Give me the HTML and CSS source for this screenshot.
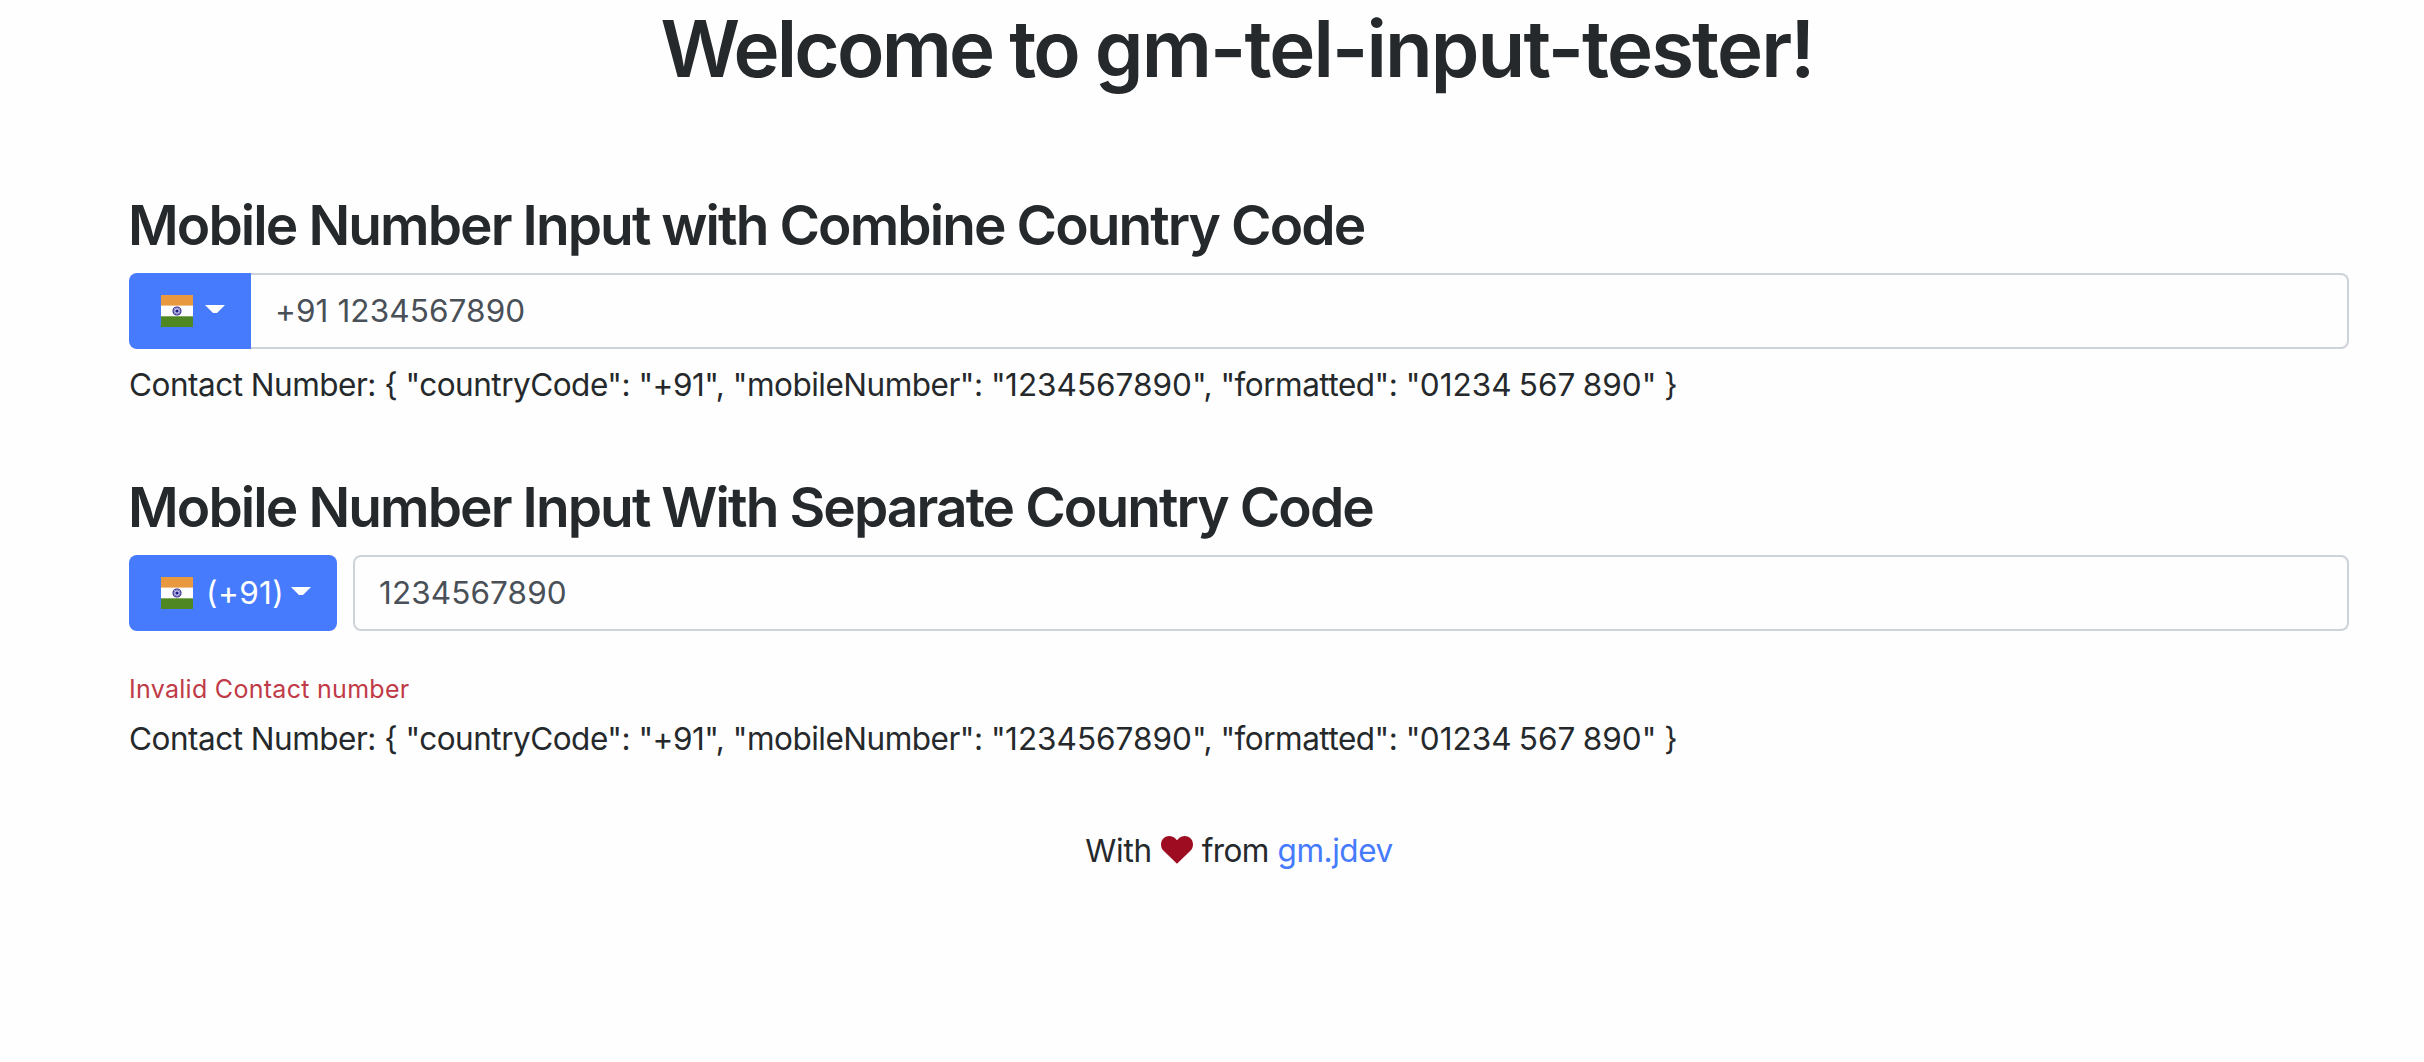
FILE: index.html
```html
<!DOCTYPE html>
<html lang="en">
<head>
<meta charset="utf-8">
<title>gm-tel-input-tester</title>
<link rel="stylesheet" href="styles.css">
</head>
<body>
<svg class="defs" width="0" height="0" aria-hidden="true">
  <symbol id="flag-in" viewBox="0 0 32 32">
    <rect width="32" height="32" fill="#fefefe"/>
    <rect width="32" height="10.6" fill="#e8983f"/>
    <rect y="21.3" width="32" height="10.7" fill="#4f8822"/>
    <circle cx="16" cy="16" r="4" fill="#c9c8e8" stroke="#2a2391" stroke-width="1.1"/>
    <circle cx="16" cy="16" r="2.9" fill="none" stroke="#4a45a8" stroke-width="1" stroke-dasharray=".5 .4"/>
    <circle cx="16" cy="16" r="1.6" fill="#201a8c"/>
  </symbol>
</svg>
<main class="page">
  <h1 class="title">Welcome to <span class="name">gm-tel-input-tester!</span></h1>

  <section class="sample">
    <h3 class="heading">Mobile Number Input with Combine Country Code</h3>
    <div class="group">
      <button class="country country-joined" type="button">
        <svg class="flag"><use href="#flag-in"/></svg>
        <span class="caret"></span>
      </button>
      <input class="number number-joined" type="text" value="+91 1234567890">
    </div>
    <p class="result">Contact Number: { "countryCode": "+91", "mobileNumber": "<span class="digits">1234567890</span>", "formatted": "<span class="digits">01234 567 890</span>" }</p>
  </section>

  <section class="sample">
    <h3 class="heading">Mobile Number Input With Separate Country Code</h3>
    <div class="group group-split">
      <button class="country country-split" type="button">
        <svg class="flag"><use href="#flag-in"/></svg>
        <span class="code">(+91)</span>
        <span class="caret"></span>
      </button>
      <input class="number" type="text" value="1234567890">
    </div>
    <p class="error">Invalid Contact number</p>
    <p class="result">Contact Number: { "countryCode": "+91", "mobileNumber": "<span class="digits">1234567890</span>", "formatted": "<span class="digits">01234 567 890</span>" }</p>
  </section>

  <footer class="credit">
    <span>With</span>
    <svg class="heart" viewBox="0 0 32 28"><path fill="#9e0c22" d="M16 27.8 2.6 14.8C-.9 11.2-.8 5.400 2.600 2.300 6.200-.900 11.400-.5 14.600 2.800L16 4.200 17.400 2.800C20.600-.5 25.800-.9 29.400 2.300 32.800 5.400 32.900 11.200 29.400 14.800Z"/></svg>
    <span class="from">from</span>
    <a class="link" href="#">gm.jdev</a>
  </footer>
</main>
</body>
</html>
```
FILE: styles.css
```css
* { box-sizing: border-box; }
body {
  margin: 0;
  background: #fefefe;
  color: #25292c;
  font-family: Inter, "Liberation Sans", sans-serif;
  font-size: 31.5px;
  line-height: 48px;
}
.defs { display: block; }
.page { width: 2220px; margin-left: 129px; }
.title {
  margin: 0 0 0 -4px;
  padding-top: 1px;
  height: 191px;
  text-align: center;
  white-space: nowrap;
  font-size: 78px;
  font-weight: 560;
  line-height: 96px;
  letter-spacing: -2.8px;
}
.name { letter-spacing: -1.9px; }
.heading {
  margin: 0 0 14px -1px;
  font-size: 55px;
  font-weight: 560;
  line-height: 68px;
  letter-spacing: -1.9px;
}
.sample { margin-bottom: 64px; }
.group { display: flex; height: 76px; }
.group-split { gap: 16px; }
.country {
  display: flex;
  align-items: center;
  padding: 0 0 0 32px;
  border: 0;
  border-radius: 8px;
  background: #457bfc;
  color: #fff;
  font: inherit;
}
.country-joined { width: 122px; border-radius: 8px 0 0 8px; }
.country-split { width: 208px; }
.flag { width: 32px; height: 32px; }
.caret {
  width: 20px;
  height: 8px;
  margin: -4px 0 0 12px;
  background: #fff;
  clip-path: polygon(0 0, 100% 0, 60% 100%, 40% 100%);
}
.code { width: 74px; margin: 0 0 0 13px; letter-spacing: .4px; }
.country-split .caret { margin-left: 11px; }
.number {
  flex: 1;
  min-width: 0;
  padding: 0 24px;
  border: 2px solid #cdd3d8;
  border-radius: 8px;
  background: #fefefe;
  color: #495057;
  font: inherit;
  letter-spacing: .1px;
}
.number-joined { border-left: 0; border-radius: 0 8px 8px 0; }
.result {
  margin: 12px 0 0;
  white-space: nowrap;
  letter-spacing: -.5px;
}
.digits { letter-spacing: 0; word-spacing: -1.5px; }
.error {
  margin: 39px 0 0;
  color: #c03b47;
  font-size: 25px;
  line-height: 38px;
  letter-spacing: .29px;
}
.error + .result { margin-top: 7px; }
.credit {
  display: flex;
  justify-content: center;
  align-items: center;
  letter-spacing: -.25px;
}
.heart { width: 32px; height: 28px; margin: -3px 9px 0; }
.from { letter-spacing: -.7px; margin-right: 9px; }
.link { color: #457bfc; text-decoration: none; letter-spacing: -.45px; }
```
